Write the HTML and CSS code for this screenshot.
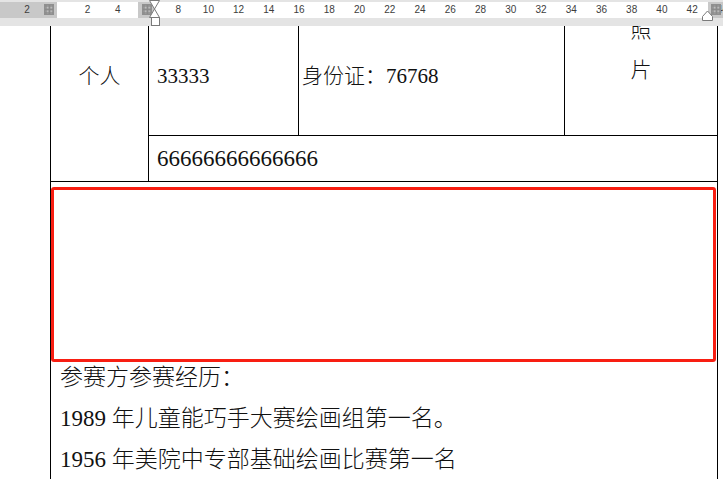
FILE: index.html
```html
<!DOCTYPE html>
<html lang="zh-CN">
<head>
<meta charset="utf-8">
<title>参赛报名表</title>
<link rel="stylesheet" href="styles.css">
</head>
<body>
<div class="doc">
  <div class="sheet">
    <div class="cell person">个人</div>
    <div class="cell num">33333</div>
    <div class="cell idcard">身份证：76768</div>
    <div class="cell photo">照<br>片</div>
    <div class="cell phone">66666666666666</div>
    <div class="cell exp">
      <p>参赛方参赛经历：</p>
      <p>1989 年儿童能巧手大赛绘画组第一名。</p>
      <p>1956 年美院中专部基础绘画比赛第一名</p>
    </div>
  </div>
  <div class="mark"></div>
</div>

<div class="ruler">
  <div class="strip">
    <div class="scale">
      <span>2</span><span></span><span>2</span><span>4</span><span></span><span>8</span><span>10</span><span>12</span><span>14</span><span>16</span><span>18</span><span>20</span><span>22</span><span>24</span><span>26</span><span>28</span><span>30</span><span>32</span><span>34</span><span>36</span><span>38</span><span>40</span><span>42</span><span>44</span>
    </div>
  </div>
  <i class="grip grip-a"></i>
  <i class="grip grip-b"></i>
  <i class="grip grip-c"></i>
  <svg class="indent-left" width="12" height="27" viewBox="0 0 12 27">
    <polygon points="0.5,0.5 10.5,0.5 5.5,9" fill="#fff" stroke="#7a7a7a"/>
    <polygon points="5.5,9 0.5,17.5 10.5,17.5" fill="#fff" stroke="#7a7a7a"/>
    <rect x="2.5" y="17.5" width="8" height="8" fill="#fff" stroke="#7a7a7a"/>
  </svg>
  <svg class="indent-right" width="12" height="12" viewBox="0 0 12 12">
    <polygon points="0.5,10.5 0.5,6.5 5.5,1 10.5,6.5 10.5,10.5" fill="#fff" stroke="#7a7a7a"/>
  </svg>
</div>
</body>
</html>
```

FILE: styles.css
```css
html, body {
  margin: 0;
  padding: 0;
  background: #fff;
  overflow: hidden;
  width: 723px;
  height: 479px;
}

.doc {
  position: relative;
  padding-left: 50px;
  font-family: "Liberation Serif", "Noto Sans CJK SC", serif;
  font-size: 23px;
  color: #111;
}

.sheet {
  display: grid;
  width: 668px;
  box-sizing: border-box;
  grid-template-columns: 97px 149px 265px 152px;
  grid-template-rows: 134px 45px 320px;
  gap: 1px;
  padding: 1px;
  background: #000;
}

.cell {
  background: #fff;
  line-height: 40px;
  white-space: nowrap;
}

.person {
  grid-row: 1 / 3;
  text-align: center;
  padding-top: 55px;
  font-size: 21px;
  font-weight: 300;
}

.num {
  padding: 55px 0 0 8px;
  font-size: 21px;
}

.idcard {
  padding: 55px 0 0 3px;
  font-size: 21px;
  font-weight: 300;
}

.photo {
  text-align: center;
  padding-top: 9px;
  font-size: 21px;
  font-weight: 300;
}

.phone {
  grid-column: 2 / 5;
  padding: 3px 0 0 8px;
}

.exp {
  grid-column: 1 / 5;
  padding: 175px 0 0 9px;
  line-height: 41px;
  font-weight: 300;
}

.exp p {
  margin: 0;
}

.mark {
  position: absolute;
  left: 51px;
  top: 187px;
  width: 665px;
  height: 175px;
  box-sizing: border-box;
  border: 3px solid #f81e12;
  border-radius: 3px;
}

/* ruler overlay */
.ruler {
  position: absolute;
  left: 0;
  top: 0;
  width: 723px;
  height: 26px;
  box-sizing: border-box;
  padding-top: 2px;
  background: #e4e4e4;
  font-family: "Liberation Sans", "DejaVu Sans", sans-serif;
  font-size: 10px;
  color: #3d3d3d;
  z-index: 2;
}

.strip {
  height: 16px;
  background: linear-gradient(90deg,
    #c8c8c8 0 57px,
    #fff 57px 138px,
    #c8c8c8 138px 155px,
    #fff 155px 708px,
    #c8c8c8 708px 723px);
  padding-left: 11.88px;
  overflow: hidden;
}

.scale {
  display: flex;
  line-height: 16px;
}

.scale span {
  flex: 0 0 30.24px;
  text-align: center;
}

.grip {
  position: absolute;
  top: 5px;
  width: 8px;
  height: 9px;
  background-color: #c8c8c8;
  background-image:
    linear-gradient(90deg, #8a8a8a 1px, transparent 1px),
    linear-gradient(#8a8a8a 1px, transparent 1px);
  background-size: 1.4px 1.4px;
  outline: 1px solid #8f8f8f;
}

.grip-a { left: 45px; }
.grip-b { left: 143px; }
.grip-c { left: 712px; }

.indent-left {
  position: absolute;
  left: 149px;
  top: 0;
}

.indent-right {
  position: absolute;
  left: 702px;
  top: 10px;
}
```
